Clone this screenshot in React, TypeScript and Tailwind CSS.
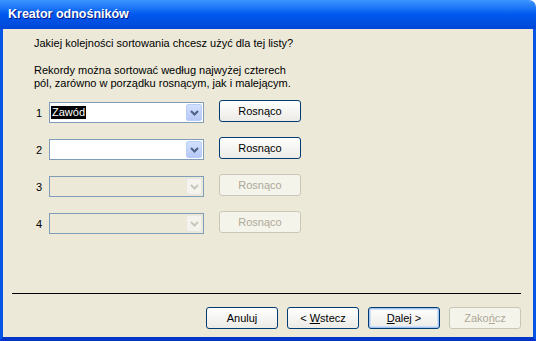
import React from "react";

const font = { fontFamily: "'Liberation Sans', Arial, sans-serif" };

const Chevron = ({ disabled }: { disabled?: boolean }) => (
  <svg width="9" height="6" viewBox="0 0 9 6">
    <path
      d="M1 1 L4.5 4.5 L8 1"
      fill="none"
      stroke={disabled ? "#c9c7ba" : "#4d6185"}
      strokeWidth="2"
    />
  </svg>
);

const Combo = ({ value, disabled }: { value?: string; disabled?: boolean }) => (
  <div
    className={`mt-[2px] flex h-[21px] w-[155px] items-stretch border border-[#7f9db9] p-[1px] ${
      disabled ? "bg-[#ece9d8]" : "bg-white"
    }`}
  >
    <div className="flex flex-1 items-center">
      {value && (
        <span className="bg-black px-[1px] leading-[13px] text-white">{value}</span>
      )}
    </div>
    <div
      className={`flex w-[16px] items-center justify-center rounded-[2px] border ${
        disabled
          ? "border-[#e8e7df] bg-[#f4f3ee]"
          : "border-[#b9cdf7] bg-gradient-to-b from-[#d2e0fd] to-[#b6c9f6]"
      }`}
    >
      <Chevron disabled={disabled} />
    </div>
  </div>
);

const Btn = ({
  children,
  disabled,
  focused,
  w = "w-[72px]",
}: {
  children: React.ReactNode;
  disabled?: boolean;
  focused?: boolean;
  w?: string;
}) => (
  <div
    className={`flex h-[22px] ${w} items-center justify-center rounded-[3px] border ${
      disabled
        ? "border-[#c9c7ba] bg-[#f5f4ea] text-[#aca899]"
        : focused
        ? "border-[#003c74] bg-gradient-to-b from-white to-[#ecebe6] text-black shadow-[inset_0_0_0_1px_#a6c2ee,inset_0_0_0_2px_#cee0fb]"
        : "border-[#003c74] bg-gradient-to-b from-white to-[#ecebe6] text-black"
    }`}
  >
    <span className="whitespace-pre">{children}</span>
  </div>
);

const rows = [
  { n: "1", value: "Zawód" },
  { n: "2" },
  { n: "3", disabled: true },
  { n: "4", disabled: true },
];

export default function App() {
  return (
    <div className="flex h-[341px] w-[536px] flex-col text-[11px] text-black" style={font}>
      <div className="flex h-[29px] items-center rounded-tr-[7px] bg-gradient-to-b from-[#3d95ff] via-[#0058ee] to-[#0047d6] pl-[8px]">
        <span className="pb-[1px] text-[12.5px] font-bold text-white [text-shadow:1px_1px_#0a1883]">
          Kreator odnośników
        </span>
      </div>
      <div className="flex flex-1 flex-col border-x-[3px] border-b-[4px] border-x-[#0055e5] border-b-[#0036c8] bg-[#ece9d8]">
        <div className="pl-[31px] pt-[8px] leading-[13px]">
          <p>Jakiej kolejności sortowania chcesz użyć dla tej listy?</p>
          <p className="mt-[14px]">
            Rekordy można sortować według najwyżej czterech
            <br />
            pól, zarówno w porządku rosnącym, jak i malejącym.
          </p>
        </div>
        <div className="mt-[10px] flex flex-col gap-[14px] pl-[31px]">
          {rows.map((r) => (
            <div key={r.n} className="flex items-start">
              <span className="mt-[5px] w-[15px] pl-[2px]">{r.n}</span>
              <Combo value={r.value} disabled={r.disabled} />
              <div className="ml-[15px]">
                <Btn w="w-[82px]" disabled={r.disabled}>
                  Rosnąco
                </Btn>
              </div>
            </div>
          ))}
        </div>
        <div className="mx-[9px] mt-auto mr-[12px] h-[1px] bg-black" />
        <div className="mb-[8px] mt-[13px] flex justify-end gap-[9px] pr-[12px]">
          <Btn>Anuluj</Btn>
          <Btn>
            {"< "}
            <span className="underline">W</span>stecz
          </Btn>
          <Btn focused>
            <span className="underline">D</span>
            {"alej >"}
          </Btn>
          <Btn disabled>
            Zako<span className="underline">ń</span>cz
          </Btn>
        </div>
      </div>
    </div>
  );
}
